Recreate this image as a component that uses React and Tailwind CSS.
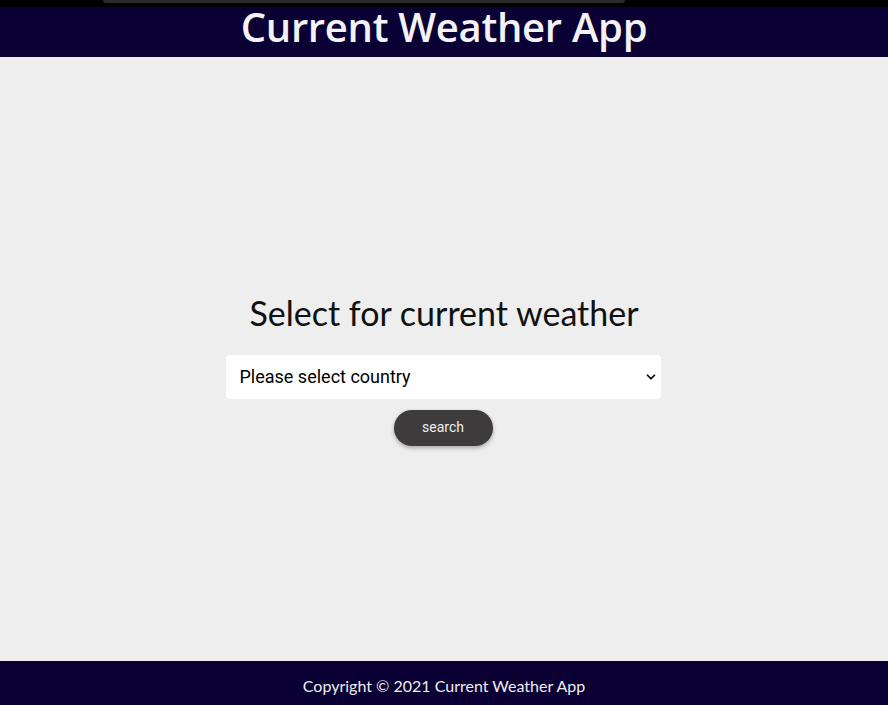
import { ChevronDown } from "lucide-react";

function App() {
  return (
    <div className="h-[705px] w-full flex flex-col bg-[#eeeeee] overflow-hidden" style={{ fontFamily: "'Open Sans', sans-serif" }}>
      {/* top strip */}
      <div className="h-[7px] bg-black shrink-0 relative">
        <div className="absolute left-[103px] top-0 w-[522px] h-[3px] bg-[#2b2b2b] rounded-b-md"></div>
      </div>

      {/* header */}
      <header className="h-[50px] shrink-0 bg-[#0b0033] flex items-start justify-center">
        <h1 className="text-[#f2f2f7] text-[40px] leading-[40px] font-['Open_Sans'] font-semibold tracking-[-0.3px]">Current Weather App</h1>
      </header>

      {/* main */}
      <main className="flex-1 flex flex-col items-center justify-center pt-[28px]">
        <h2 className="text-[34px] text-[#111] font-[Lato] leading-none mb-[25px] -mt-[5px]">Select for current weather</h2>
        <div className="relative w-[435px] h-[44px] bg-white rounded-[4px] flex items-center px-[14px] -ml-[2px]">
          <span className="text-[18px] text-black font-[Roboto]">Please select country</span>
          <ChevronDown className="absolute right-[3px] top-[15px]" size={14} strokeWidth={3} />
        </div>
        <button className="mt-[11px] w-[99px] h-[36px] rounded-full bg-[#3d3b3b] text-[#eeeeee] text-[14px] shadow-[0_2px_4px_rgba(0,0,0,0.3)] font-[Roboto] -ml-[2px]">
          search
        </button>
      </main>

      {/* footer */}
      <footer className="h-[44px] shrink-0 bg-[#0b0033] flex items-center justify-center">
        <p className="text-[#eeeeee] text-[16px] font-[Lato] mt-[5px]">Copyright © 2021 Current Weather App</p>
      </footer>
    </div>
  );
}

export default App;
